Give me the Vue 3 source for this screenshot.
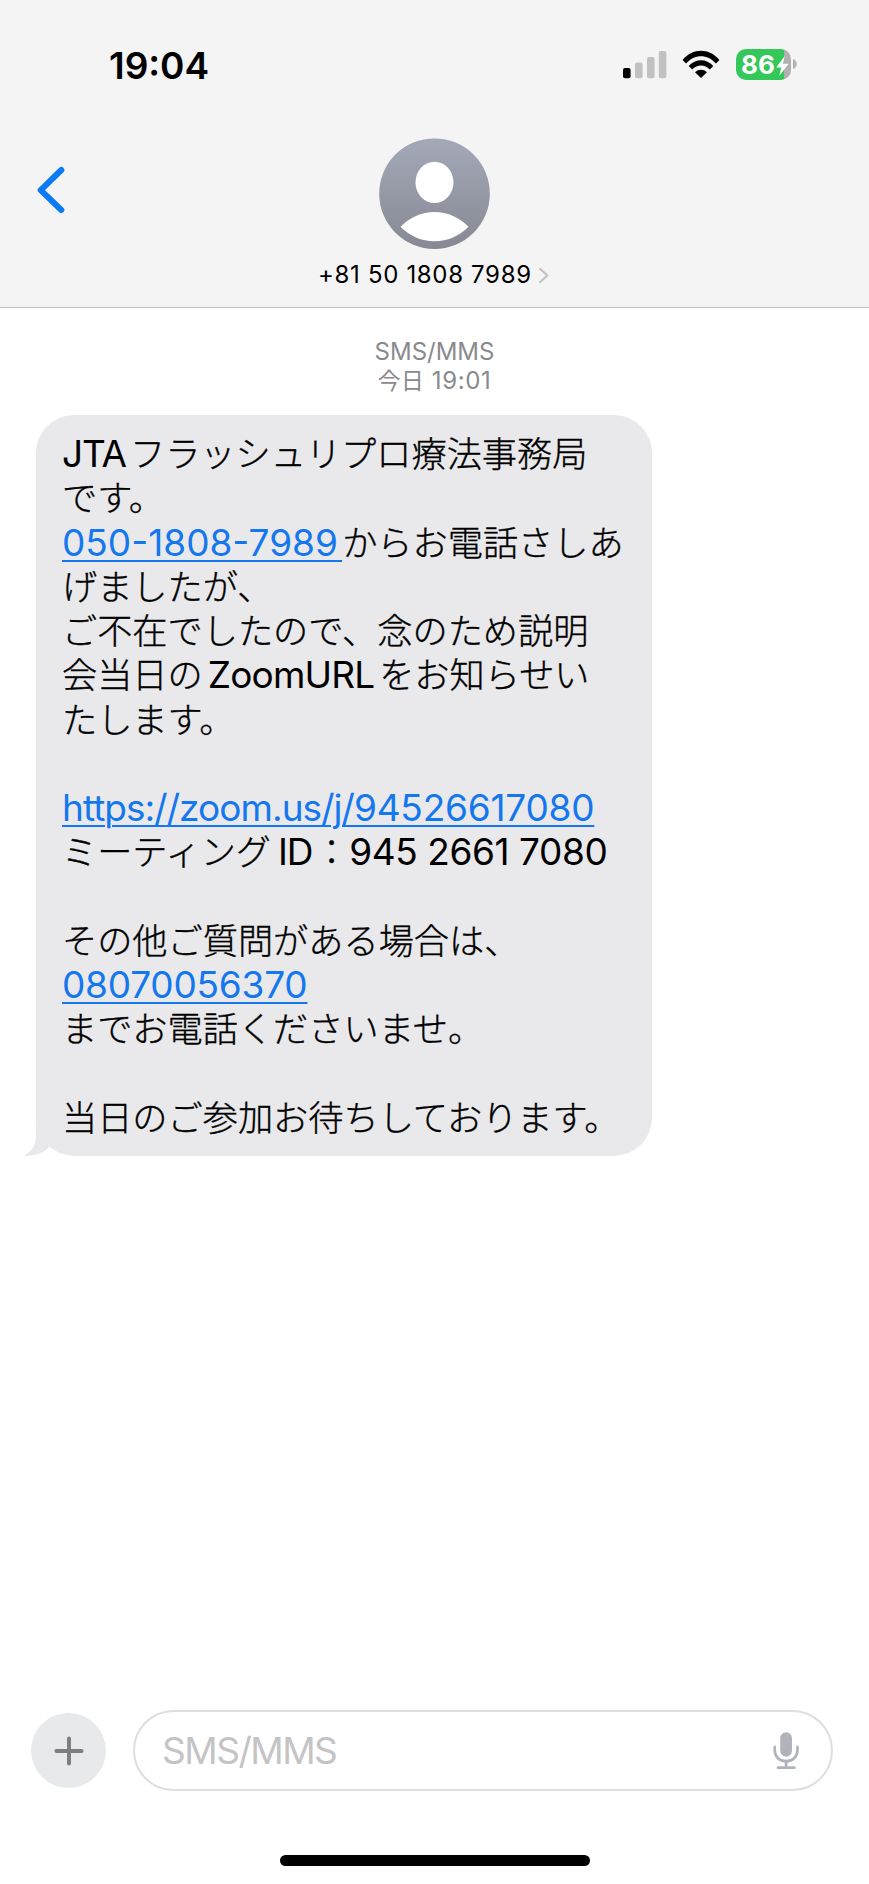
<script setup>
// Message text, split into runs: j = Japanese, l = Latin, a = link
const lines = [
  [{ k: 'l jta', t: 'JTA' }, { k: 'j', t: 'フラッシュリプロ療法事務局' }],
  [{ k: 'j', t: 'です。' }],
  [{ k: 'a phone', t: '050-1808-7989' }, { k: 'j', t: 'からお電話さしあ' }],
  [{ k: 'j', t: 'げましたが、' }],
  [{ k: 'j', t: 'ご不在でしたので、念のため説明' }],
  [{ k: 'j', t: '会当日の' }, { k: 'l zoom', t: 'ZoomURL' }, { k: 'j', t: 'をお知らせい' }],
  [{ k: 'j', t: 'たします。' }],
  [],
  [{ k: 'a url', t: 'https://zoom.us/j/' }, { k: 'a mobile', t: '94526617080' }],
  [{ k: 'j', t: 'ミーティング' }, { k: 'l mid', t: 'ID' }, { k: 'j', t: '：' }, { k: 'l num', t: '945 2661 7080' }],
  [],
  [{ k: 'j', t: 'その他ご質問がある場合は、' }],
  [{ k: 'a mobile', t: '08070056370' }],
  [{ k: 'j', t: 'までお電話くださいませ。' }],
  [],
  [{ k: 'j', t: '当日のご参加お待ちしております。' }],
]
</script>

<template>
  <div class="screen">
    <header class="header">
      <div class="status">
        <span class="time">19:04</span>
        <div class="indicators">
          <svg class="signal" width="44" height="28" viewBox="0 0 44 28">
            <rect x="0" y="17" width="7.6" height="10.3" rx="2" fill="#000" />
            <rect x="12" y="11.6" width="7.6" height="15.7" rx="2" fill="#c1c1c1" />
            <rect x="24" y="6" width="7.6" height="21.3" rx="2" fill="#c1c1c1" />
            <rect x="35.8" y="0" width="7.6" height="27.3" rx="2" fill="#c1c1c1" />
          </svg>
          <svg class="wifi" width="38" height="28" viewBox="0 0 38 28">
            <path d="M.6 9.9C10.8-2.3 27.2-2.3 37.4 9.9L34 13.6C25.6 3.8 12.4 3.8 4 13.6Z" fill="#000" />
            <path d="M6.7 16C13.6 8.2 24.4 8.2 31.3 16L27.8 19.6C22.6 14.2 15.4 14.2 10.2 19.6Z" fill="#000" />
            <path d="M13 22.2C16.4 18.9 21.6 18.9 25 22.2L19 28Z" fill="#000" />
          </svg>
          <div class="battery">
            <span class="level">86</span>
            <svg class="bolt" width="13" height="20" viewBox="0 0 13 20">
              <path d="M8.6.2L.2 11.4H5.2L3.4 19.8L12.7 7.7H7.2Z" fill="#fff" />
            </svg>
          </div>
          <svg class="nub" width="4" height="10" viewBox="0 0 4 10"><path d="M0 0C5 1.6 5 8.4 0 10Z" fill="#b4b4b4" /></svg>
        </div>
      </div>
      <div class="contact-row">
        <svg class="back" width="30" height="50" viewBox="0 0 30 50">
          <path d="M25.3 5L4.7 25.2L25.3 45" fill="none" stroke="#0b7af5" stroke-width="6" stroke-linecap="round" stroke-linejoin="round" />
        </svg>
        <svg class="avatar" width="111" height="111" viewBox="0 0 111 111">
          <defs>
            <linearGradient id="av" x1="0" y1="0" x2="0" y2="1">
              <stop offset="0" stop-color="#a4a9b8" />
              <stop offset="1" stop-color="#868993" />
            </linearGradient>
          </defs>
          <circle cx="55.5" cy="55.7" r="55.3" fill="url(#av)" />
          <ellipse cx="55.5" cy="44.4" rx="19" ry="20.7" fill="#fff" />
          <path d="M21.5 88.8A46.5 46.5 0 0 1 89.5 88.8A47.5 47.5 0 0 1 21.5 88.8Z" fill="#fff" />
        </svg>
      </div>
      <div class="number">
        <span class="digits">+81 50 1808 7989</span>
        <svg class="more" width="11" height="17" viewBox="0 0 11 17">
          <path d="M1.5 1.2L9.3 8.5L1.5 15.8" fill="none" stroke="#c0c0c2" stroke-width="2" />
        </svg>
      </div>
    </header>

    <main class="thread">
      <div class="stamp">
        <div class="kind">SMS/MMS</div>
        <div class="when"><span class="sj">今日</span> 19:01</div>
      </div>
      <div class="bubble">
        <svg class="tail" width="30" height="34" viewBox="0 0 30 34">
          <path d="M12 0V14C12 23 8 29 0 33.4C9 34.6 19 31.5 25.5 25L30 10V0Z" fill="#e9e9eb" />
        </svg>
        <p v-for="(line, i) in lines" :key="i" class="line"><span v-for="(r, n) in line" :key="n" :class="r.k">{{ r.t }}</span></p>
      </div>
    </main>

    <footer class="composer">
      <div class="plus">
        <svg width="30" height="30" viewBox="0 0 30 30">
          <path d="M15 2.4V27.6M2.4 15H27.6" stroke="#7d7e83" stroke-width="4" stroke-linecap="round" />
        </svg>
      </div>
      <div class="field">
        <span class="placeholder">SMS/MMS</span>
        <svg class="mic" width="26" height="38" viewBox="0 0 26 38">
          <rect x="7.2" y=".3" width="11.8" height="24.4" rx="5.9" fill="#b0b4ba" />
          <path d="M1.7 14.8V18C1.7 24.8 6.6 29.2 13.1 29.2S24.5 24.8 24.5 18V14.8M13.1 29.2V35.6M5 35.7H21.4" fill="none" stroke="#b0b4ba" stroke-width="2.7" stroke-linecap="round" />
        </svg>
      </div>
    </footer>
    <div class="home"></div>
  </div>
</template>

<style>
body { background: #fff; }
</style>

<style scoped>
.screen {
  width: 869px;
  height: 1884px;
  display: flex;
  flex-direction: column;
  box-sizing: border-box;
  background: #fff;
  color: #000;
  font-family: Inter, "Noto Sans CJK JP", sans-serif;
  overflow: hidden;
}
svg { display: block; flex: none; }
.header {
  height: 308px;
  flex: none;
  box-sizing: border-box;
  background: #f4f4f4;
  border-bottom: 1px solid #c0c0c1;
}
.status {
  display: flex;
  justify-content: space-between;
  height: 138px;
  padding: 0 72px 0 109px;
}
.time {
  margin-top: 43px;
  height: 45px;
  line-height: 45px;
  font-size: 37px;
  font-weight: 600;
}
.indicators { display: flex; align-items: flex-start; }
.signal { margin-top: 51px; }
.wifi { margin: 50px 16px 0 15px; }
.battery {
  display: flex;
  align-items: center;
  box-sizing: border-box;
  width: 55px;
  height: 31px;
  margin-top: 49px;
  padding-left: 5px;
  border-radius: 10px;
  background: linear-gradient(90deg, #34c759 48px, #b0b0b0 48px);
}
.level {
  color: #fff;
  font-size: 26px;
  line-height: 31px;
  font-weight: 700;
  width: 35px;
}
.bolt { margin-top: 2px; }
.nub { margin: 59px 0 0 2px; }
.contact-row {
  display: grid;
  grid-template-columns: 379px 111px;
  height: 111px;
}
.back { margin: 27px 0 0 36px; }
.number {
  display: flex;
  align-items: center;
  height: 30px;
  margin: 11px 0 0 318px;
}
.digits { font-size: 24px; line-height: 30px; width: 220px; letter-spacing: 0.67px; white-space: nowrap; }
.more { margin-top: 1px; }
.thread { flex: 1; }
.stamp {
  height: 107px;
  box-sizing: border-box;
  padding-top: 29px;
  text-align: center;
  color: #8a8a8e;
  font-size: 24px;
  line-height: 29px;
}
.when { letter-spacing: 0.6px; }
.sj { font-size: 22.8px; line-height: 0; }
.bubble {
  position: relative;
  box-sizing: border-box;
  width: 616px;
  height: 741px;
  margin-left: 36px;
  padding: 17px 0 0 26px;
  border-radius: 38px;
  background: #e9e9eb;
}
.tail { position: absolute; left: -12px; bottom: 0; }
.line {
  position: relative;
  margin: 0;
  height: 44.25px;
  line-height: 44.25px;
  font-size: 37px;
  white-space: pre;
}
.line span { line-height: 0; }
.line .j {
  font-family: "Noto Sans CJK JP", sans-serif;
  font-size: 35.2px;
  font-weight: 300;
  -webkit-text-stroke: 0.35px #000;
}
.line .l { display: inline-block; box-sizing: border-box; }
.line .jta { width: 68px; letter-spacing: -1.2px; }
.line .zoom { width: 176.4px; padding-left: 5px; letter-spacing: -0.8px; }
.line .mid { width: 43px; padding-left: 7px; letter-spacing: -1.3px; }
.line .num { letter-spacing: -0.42px; }
.line .a {
  color: #1477ee;
  text-decoration: underline;
  text-decoration-thickness: 2px;
  text-underline-offset: 4px;
}
.line .phone::after { content: " "; font-size: 15px; }
.line .url { letter-spacing: -0.95px; }
.line .mobile { letter-spacing: -0.22px; }
.composer {
  display: flex;
  align-items: center;
  height: 81px;
  padding: 0 36px 0 31px;
  gap: 27px;
}
.plus {
  display: flex;
  align-items: center;
  justify-content: center;
  width: 75px;
  height: 75px;
  border-radius: 50%;
  background: #e8e9eb;
}
.field {
  flex: 1;
  display: flex;
  align-items: center;
  justify-content: space-between;
  box-sizing: border-box;
  height: 81px;
  padding: 0 32px 0 27px;
  border: 2px solid #dededf;
  border-radius: 41px;
}
.placeholder { color: #c4c4c6; font-size: 37px; line-height: 45px; letter-spacing: -1.5px; }
.home {
  width: 310px;
  height: 11px;
  margin: 64px 0 18px 280px;
  border-radius: 6px;
  background: #000;
}
</style>
